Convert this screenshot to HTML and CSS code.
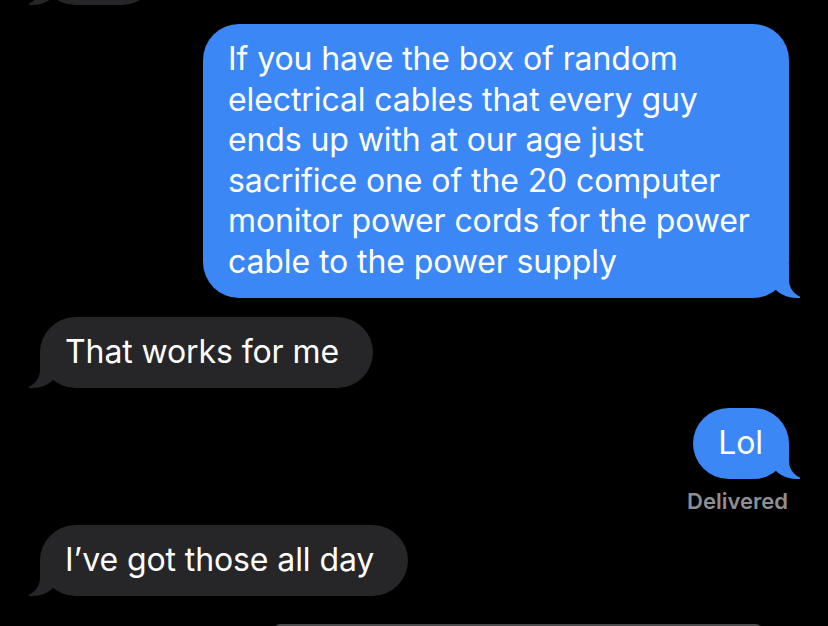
FILE: index.html
```html
<!DOCTYPE html>
<html lang="en">
<head>
    <meta charset="UTF-8">
    <title>Messages</title>
    <link rel="stylesheet" href="styles.css">
</head>
<body>
    <div class="thread">
        <!-- previous message, scrolled mostly off screen -->
        <div class="row received">
            <div class="bubble stub"></div>
        </div>

        <div class="row sent">
            <div class="bubble">If you have the box of random electrical cables that every guy ends up with at our age just sacrifice one of the 20 computer monitor power cords for the power cable to the power supply</div>
        </div>

        <div class="row received">
            <div class="bubble">That works for me</div>
        </div>

        <div class="row sent lol">
            <div class="bubble">Lol</div>
        </div>
        <div class="status">Delivered</div>

        <div class="row received after-status">
            <div class="bubble">I’ve got those all day</div>
        </div>

        <div class="composer"></div>
    </div>
</body>
</html>
```

FILE: styles.css
```css
body { margin: 0; background: #000; font-family: Inter, "Open Sans", sans-serif; overflow: hidden; }
.thread { display: flex; flex-direction: column; padding: 0 39px 0 40px; margin-top: -66px; }
.row { display: flex; margin-top: 19px; }
.row:first-child { margin-top: 0; }
.row.sent { justify-content: flex-end; }
.row.lol { margin-top: 20px; }
.bubble { position: relative; max-width: 535px; padding: 15.25px 26px 15.25px 25px; border-radius: 36px; font-size: 32px; letter-spacing: -0.1px; line-height: 40.5px; color: #fff; }
.received .bubble { padding-right: 34px; }
.bubble.stub { width: 58px; height: 40.5px; }
.sent .bubble { background: #3c87f6; }
.received .bubble { background: #262629; }

/* tails */
.bubble::before, .bubble::after { content: ""; position: absolute; bottom: 0; height: 34px; }
.sent .bubble::before { right: -11px; width: 30px; background: #3c87f6; border-bottom-left-radius: 26px 22px; }
.sent .bubble::after { right: -40px; width: 40px; background: #000; border-bottom-left-radius: 18px; }
.received .bubble::before { left: -11px; width: 30px; background: #262629; border-bottom-right-radius: 26px 22px; }
.received .bubble::after { left: -40px; width: 40px; background: #000; border-bottom-right-radius: 18px; }

.status { align-self: flex-end; margin: 9px 1px 0 0; font-size: 22px; line-height: 26px; font-weight: 600; color: #8e8e93; }
.row.after-status { margin-top: 11px; }
.composer { margin: 28px 0 0 234px; width: 488px; height: 40px; border-top: 2px solid #4a4a4c; border-radius: 6px 6px 0 0; }
```
